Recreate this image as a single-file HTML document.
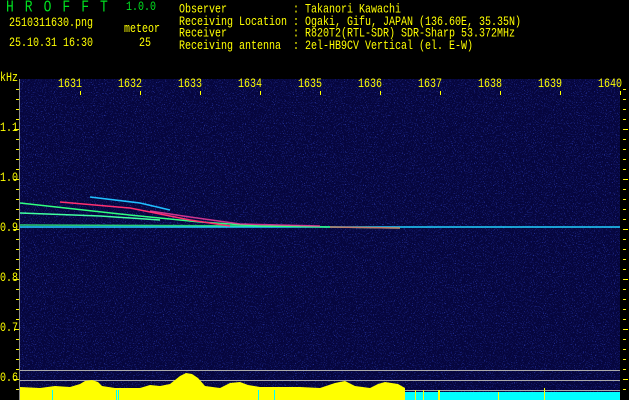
<!DOCTYPE html>
<html><head><meta charset="utf-8"><style>
html,body{margin:0;padding:0;background:#000;}
body{width:629px;height:400px;position:relative;overflow:hidden;font-family:"Liberation Mono",monospace;font-size:10px;color:#ffff00;}
.t{position:absolute;white-space:pre;line-height:12px;transform:scale(1,1.25);transform-origin:0 0;}
</style></head><body>
<svg width="629" height="400" style="position:absolute;left:0;top:0">
<defs>
<filter id="n" x="0" y="0" width="100%" height="100%">
<feTurbulence type="fractalNoise" baseFrequency="0.9" numOctaves="1" seed="7"/>
<feColorMatrix values="0 0 0 0 0.05  0 0 0 0 0.1  0 0 0 0 0.9  6 0 0 0 -3.4"/>
</filter>
</defs>
<rect x="20" y="79" width="600" height="321" fill="#06063e"/>
<rect x="20" y="79" width="600" height="321" filter="url(#n)" opacity="0.5"/>
<g fill="none" stroke-width="1.5">
<path d="M20 227 L620 227" stroke="#20d0ff"/>
<path d="M20 225 L300 226" stroke="#30ff80" opacity="0.8"/>
<path d="M20 203 L120 214 L200 222 L260 226 L330 227 L400 228" stroke="#30ff80"/>
<path d="M20 213 L100 216 L160 220" stroke="#40ffa0"/>
<path d="M60 202 L130 208 L160 214 L190 220 L230 226" stroke="#ff3070"/>
<path d="M150 211 L190 217 L240 224 L320 226" stroke="#ff40a0" opacity="0.8"/>
<path d="M90 197 L140 203 L170 210" stroke="#20c0ff"/>
<path d="M330 227 L400 228" stroke="#ff4060" opacity="0.7"/>
</g>
<rect x="20" y="370" width="600" height="1" fill="#aaa"/>
<rect x="20" y="380" width="600" height="1" fill="#aaa"/>
<rect x="405" y="390" width="215" height="1" fill="#aaa"/>
<polygon fill="#ffff00" points="20,400 20,387 40,388 55,386 70,387 80,384 85,381 92,380 98,382 102,386 115,388 140,388 150,385 160,386 170,384 180,376 186,373 192,374 198,378 205,386 220,388 230,383 240,382 248,385 260,387 300,387 320,388 335,383 345,381 355,386 370,388 378,384 385,382 398,384 405,388 405,400"/>
<polygon fill="#00ffff" points="405,400 405,392 620,392 620,400"/>
<g fill="#00ffff"><rect x="52" y="390" width="1" height="10"/><rect x="116" y="390" width="1" height="10"/><rect x="118" y="390" width="1" height="10"/><rect x="258" y="390" width="1" height="10"/><rect x="274" y="390" width="1" height="10"/></g>
<g fill="#ffff00"><rect x="415" y="390" width="1" height="10"/><rect x="423" y="390" width="1" height="10"/><rect x="438" y="390" width="2" height="10"/><rect x="498" y="392" width="1" height="8"/><rect x="544" y="388" width="1" height="12"/></g>
<rect x="19" y="79" width="1" height="321" fill="#888"/>
<g fill="#ffff00">
<rect x="16" y="89" width="3" height="1"/><rect x="16" y="99" width="3" height="1"/><rect x="16" y="109" width="3" height="1"/><rect x="16" y="119" width="3" height="1"/><rect x="14" y="129" width="5" height="1"/>
<rect x="16" y="139" width="3" height="1"/><rect x="16" y="149" width="3" height="1"/><rect x="16" y="159" width="3" height="1"/><rect x="16" y="169" width="3" height="1"/><rect x="14" y="179" width="5" height="1"/>
<rect x="16" y="189" width="3" height="1"/><rect x="16" y="199" width="3" height="1"/><rect x="16" y="209" width="3" height="1"/><rect x="16" y="219" width="3" height="1"/><rect x="14" y="229" width="5" height="1"/>
<rect x="16" y="239" width="3" height="1"/><rect x="16" y="249" width="3" height="1"/><rect x="16" y="259" width="3" height="1"/><rect x="16" y="269" width="3" height="1"/><rect x="14" y="279" width="5" height="1"/>
<rect x="16" y="289" width="3" height="1"/><rect x="16" y="299" width="3" height="1"/><rect x="16" y="309" width="3" height="1"/><rect x="16" y="319" width="3" height="1"/><rect x="14" y="329" width="5" height="1"/>
<rect x="16" y="339" width="3" height="1"/><rect x="16" y="349" width="3" height="1"/><rect x="16" y="359" width="3" height="1"/><rect x="16" y="369" width="3" height="1"/><rect x="14" y="379" width="5" height="1"/><rect x="16" y="389" width="3" height="1"/>
<rect x="623" y="89" width="3" height="1"/><rect x="623" y="99" width="3" height="1"/><rect x="623" y="109" width="3" height="1"/><rect x="623" y="119" width="3" height="1"/><rect x="623" y="129" width="5" height="1"/>
<rect x="623" y="139" width="3" height="1"/><rect x="623" y="149" width="3" height="1"/><rect x="623" y="159" width="3" height="1"/><rect x="623" y="169" width="3" height="1"/><rect x="623" y="179" width="5" height="1"/>
<rect x="623" y="189" width="3" height="1"/><rect x="623" y="199" width="3" height="1"/><rect x="623" y="209" width="3" height="1"/><rect x="623" y="219" width="3" height="1"/><rect x="623" y="229" width="5" height="1"/>
<rect x="623" y="239" width="3" height="1"/><rect x="623" y="249" width="3" height="1"/><rect x="623" y="259" width="3" height="1"/><rect x="623" y="269" width="3" height="1"/><rect x="623" y="279" width="5" height="1"/>
<rect x="623" y="289" width="3" height="1"/><rect x="623" y="299" width="3" height="1"/><rect x="623" y="309" width="3" height="1"/><rect x="623" y="319" width="3" height="1"/><rect x="623" y="329" width="5" height="1"/>
<rect x="623" y="339" width="3" height="1"/><rect x="623" y="349" width="3" height="1"/><rect x="623" y="359" width="3" height="1"/><rect x="623" y="369" width="3" height="1"/><rect x="623" y="379" width="5" height="1"/><rect x="623" y="389" width="3" height="1"/>
<rect x="80" y="91" width="1" height="4"/><rect x="140" y="91" width="1" height="4"/><rect x="200" y="91" width="1" height="4"/><rect x="260" y="91" width="1" height="4"/><rect x="320" y="91" width="1" height="4"/><rect x="380" y="91" width="1" height="4"/><rect x="440" y="91" width="1" height="4"/><rect x="500" y="91" width="1" height="4"/><rect x="560" y="91" width="1" height="4"/><rect x="620" y="91" width="1" height="4"/>
</g>
</svg>
<div class="t" style="left:6px;top:0px;color:#00e020;font-size:13px;letter-spacing:11px">HROFFT</div>
<div class="t" style="left:126px;top:1px;color:#00e020;">1.0.0</div>
<div class="t" style="left:9px;top:17px">2510311630.png</div>
<div class="t" style="left:124px;top:23px">meteor</div>
<div class="t" style="left:9px;top:37px">25.10.31 16:30</div>
<div class="t" style="left:139px;top:37px">25</div>
<div class="t" style="left:179px;top:5px;line-height:9.6px">Observer           : Takanori Kawachi
Receiving Location : Ogaki, Gifu, JAPAN (136.60E, 35.35N)
Receiver           : R820T2(RTL-SDR) SDR-Sharp 53.372MHz
Receiving antenna  : 2el-HB9CV Vertical (el. E-W)</div>
<div class="t" style="left:0px;top:72px">kHz</div>
<div class="t" style="left:58px;top:78px">1631</div>
<div class="t" style="left:118px;top:78px">1632</div>
<div class="t" style="left:178px;top:78px">1633</div>
<div class="t" style="left:238px;top:78px">1634</div>
<div class="t" style="left:298px;top:78px">1635</div>
<div class="t" style="left:358px;top:78px">1636</div>
<div class="t" style="left:418px;top:78px">1637</div>
<div class="t" style="left:478px;top:78px">1638</div>
<div class="t" style="left:538px;top:78px">1639</div>
<div class="t" style="left:598px;top:78px">1640</div>
<div class="t" style="left:0px;top:122px">1.1</div>
<div class="t" style="left:0px;top:172px">1.0</div>
<div class="t" style="left:0px;top:222px">0.9</div>
<div class="t" style="left:0px;top:272px">0.8</div>
<div class="t" style="left:0px;top:322px">0.7</div>
<div class="t" style="left:0px;top:372px">0.6</div>
</body></html>
